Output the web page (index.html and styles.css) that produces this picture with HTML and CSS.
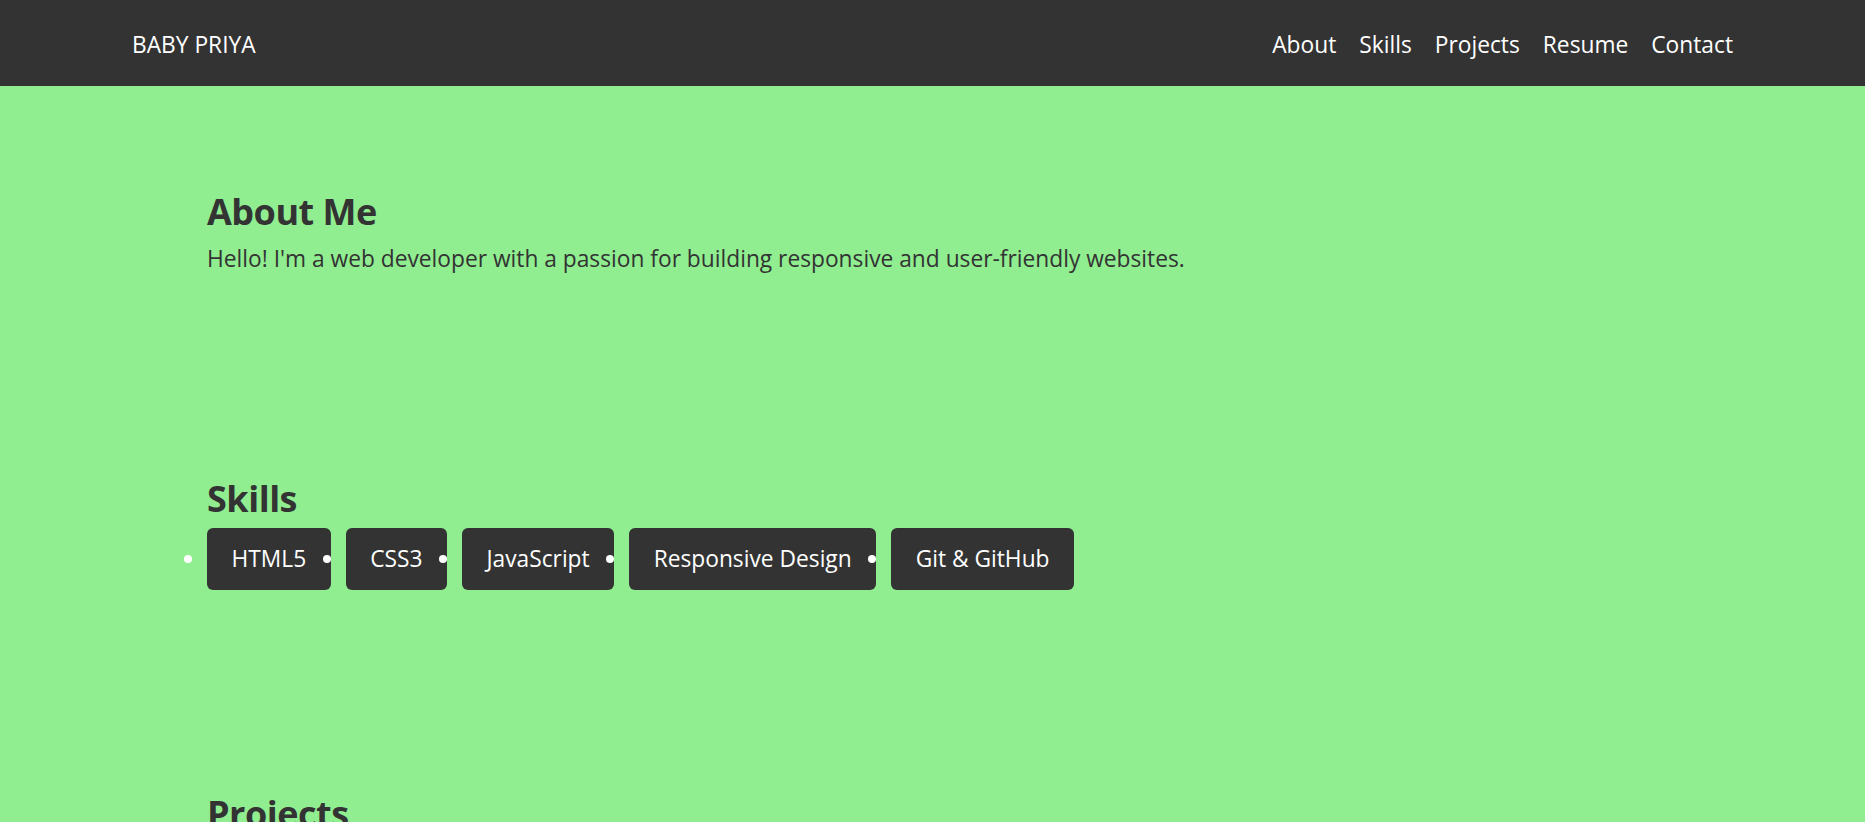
FILE: index.html
```html
<!DOCTYPE html>
<html lang="en">
<head>
<meta charset="utf-8">
<title>Baby Priya</title>
<link rel="stylesheet" href="styles.css">
</head>
<body>
<header class="site-header">
  <div class="brand">BABY PRIYA</div>
  <nav class="nav">
    <a href="#about">About</a>
    <a href="#skills">Skills</a>
    <a href="#projects">Projects</a>
    <a href="#resume">Resume</a>
    <a href="#contact">Contact</a>
  </nav>
</header>
<main class="content">
  <section class="section" id="about">
    <h2 class="section-title">About Me</h2>
    <p class="about-text">Hello! I'm a web developer with a passion for building responsive and user-friendly websites.</p>
  </section>
  <section class="section" id="skills">
    <h2 class="section-title">Skills</h2>
    <ul class="skill-list">
      <li class="skill">HTML5</li>
      <li class="skill">CSS3</li>
      <li class="skill">JavaScript</li>
      <li class="skill">Responsive Design</li>
      <li class="skill">Git &amp; GitHub</li>
    </ul>
  </section>
  <section class="section" id="projects">
    <h2 class="section-title">Projects</h2>
  </section>
</main>
</body>
</html>
```
FILE: styles.css
```css
html, body {
  margin: 0;
  padding: 0;
}
body {
  background: #90ee90;
  color: #333333;
  font-family: "Open Sans", "Noto Sans", sans-serif;
  font-size: 22.75px;
}
.site-header {
  height: 86px;
  background: #333333;
  color: #ffffff;
  display: flex;
  align-items: center;
  justify-content: space-between;
  padding: 0 132px;
  box-sizing: border-box;
}
.brand {
  font-size: 22.75px;
  padding-top: 2px;
}
.nav {
  display: flex;
  gap: 23px;
  padding-top: 2px;
}
.nav a {
  color: #ffffff;
  text-decoration: none;
  font-size: 22.75px;
}
.content {
  padding: 0 207px;
}
.section {
  padding: 104px 0 98px;
}
.section-title {
  margin: 0 0 8px;
  font-size: 36px;
  line-height: 43px;
  font-weight: 700;
  letter-spacing: -0.5px;
}
.about-text {
  margin: 9px 0 0;
  font-size: 22.75px;
  line-height: 33px;
}
.skill-list {
  display: flex;
  gap: 15px;
  margin: 0;
  padding: 0;
  list-style: disc outside;
}
.skill {
  background: #333333;
  color: #ffffff;
  padding: 15px 24.5px;
  line-height: 32px;
  border-radius: 6px;
  font-size: 22.75px;
}
```
